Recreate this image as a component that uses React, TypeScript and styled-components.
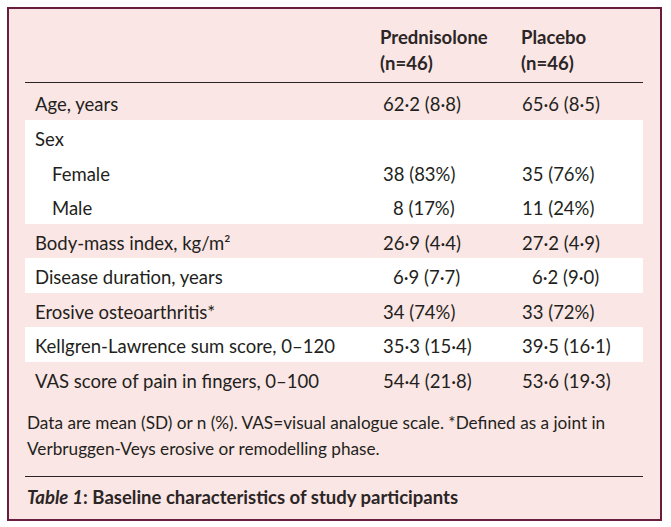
import React from "react";
import styled, { createGlobalStyle } from "styled-components";

const GlobalStyle = createGlobalStyle`
  html, body {
    margin: 0;
    padding: 0;
    background: #ffffff;
  }
  body {
    font-family: Lato, "Open Sans", sans-serif;
    color: #231f20;
  }
`;

const Page = styled.div`
  padding: 7px 0 0 7px;
`;

const Frame = styled.div`
  width: 655px;
  height: 514px;
  box-sizing: border-box;
  border: 2px solid #6b1d3e;
  background: #fae6e4;
  padding: 0 17px 0 16px;
`;

const HeadRow = styled.div`
  display: grid;
  grid-template-columns: 355px 141px 1fr;
  padding: 15px 0 6px;
  border-bottom: 1px solid #2a2224;
  font-size: 18.5px;
  font-weight: 700;
  line-height: 26px;
`;

const HeadCell = styled.div`
  color: #2b2526;
`;

const Row = styled.div<{ $shade: "pink" | "white"; $first?: boolean }>`
  display: grid;
  grid-template-columns: 355px 141px 1fr;
  align-items: center;
  height: ${(p) => (p.$first ? "37px" : "34.5px")};
  padding-top: ${(p) => (p.$first ? "4px" : "4px")};
  box-sizing: border-box;
  background: ${(p) => (p.$shade === "white" ? "#ffffff" : "transparent")};
  font-size: 18.5px;
`;

const Label = styled.div<{ $sub?: boolean }>`
  padding-left: ${(p) => (p.$sub ? "27px" : "10px")};
`;

const Value = styled.div<{ $indent?: boolean; $col: 1 | 2 }>`
  padding-left: ${(p) => (p.$col === 1 ? 3 : 1) + (p.$indent ? 10 : 0)}px;
`;

const Footnote = styled.p`
  margin: 0;
  padding: 14px 0 0 2px;
  font-size: 17.2px;
  line-height: 26px;
`;

const Rule = styled.div`
  margin-top: 14px;
  border-top: 1px solid #2a2224;
`;

const Caption = styled.div`
  margin-top: 8px;
  padding-left: 2px;
  font-size: 18.5px;
  font-weight: 700;
  line-height: 24px;
  color: #2b2526;
  em {
    font-style: italic;
  }
`;

type Item = {
  label: string;
  a?: string;
  b?: string;
  sub?: boolean;
  shade: "pink" | "white";
  indentA?: boolean;
  indentB?: boolean;
};

const rows: Item[] = [
  { label: "Sex", shade: "white" },
  { label: "Female", a: "38 (83%)", b: "35 (76%)", sub: true, shade: "white" },
  { label: "Male", a: "8 (17%)", b: "11 (24%)", sub: true, shade: "white", indentA: true },
  { label: "Body-mass index, kg/m²", a: "26·9 (4·4)", b: "27·2 (4·9)", shade: "pink" },
  { label: "Disease duration, years", a: "6·9 (7·7)", b: "6·2 (9·0)", shade: "white", indentA: true, indentB: true },
  { label: "Erosive osteoarthritis*", a: "34 (74%)", b: "33 (72%)", shade: "pink" },
  { label: "Kellgren-Lawrence sum score, 0–120", a: "35·3 (15·4)", b: "39·5 (16·1)", shade: "white" },
  { label: "VAS score of pain in fingers, 0–100", a: "54·4 (21·8)", b: "53·6 (19·3)", shade: "pink" },
];

const App = () => {
  return (
    <Page>
      <GlobalStyle />
      <Frame>
        <HeadRow>
          <div />
          <HeadCell>
            Prednisolone
            <br />
            (n=46)
          </HeadCell>
          <HeadCell>
            Placebo
            <br />
            (n=46)
          </HeadCell>
        </HeadRow>
        <Row $shade="pink" $first>
          <Label>Age, years</Label>
          <Value $col={1}>62·2 (8·8)</Value>
          <Value $col={2}>65·6 (8·5)</Value>
        </Row>
        {rows.map((r) => (
          <Row key={r.label} $shade={r.shade}>
            <Label $sub={r.sub}>{r.label}</Label>
            <Value $col={1} $indent={r.indentA}>{r.a}</Value>
            <Value $col={2} $indent={r.indentB}>{r.b}</Value>
          </Row>
        ))}
        <Footnote>
          Data are mean (SD) or n (%). VAS=visual analogue scale. *Defined as a joint in
          Verbruggen-Veys erosive or remodelling phase.
        </Footnote>
        <Rule />
        <Caption>
          <em>Table 1</em>: Baseline characteristics of study participants
        </Caption>
      </Frame>
    </Page>
  );
};

export default App;
